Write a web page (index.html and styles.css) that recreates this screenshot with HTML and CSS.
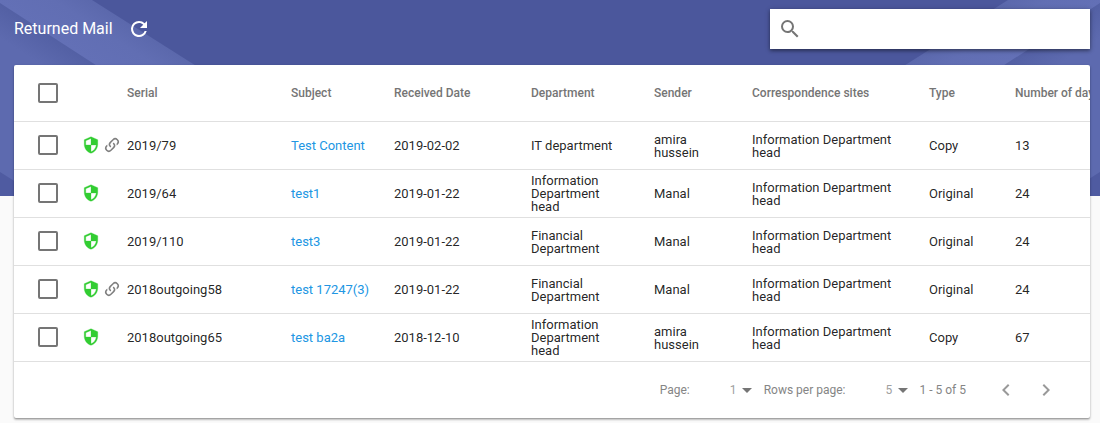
FILE: index.html
```html
<!DOCTYPE html>
<html lang="en">
<head>
<meta charset="utf-8">
<title>Returned Mail</title>
<link rel="stylesheet" href="styles.css">
</head>
<body>
<svg class="symbols" aria-hidden="true">
  <symbol id="shield" viewBox="0 0 24 24"><path stroke="currentColor" stroke-width=".4" d="M12 1 3 5v6c0 5.550 3.840 10.740 9 12 5.160-1.260 9-6.450 9-12V5l-9-4zm0 10.990h7c-.53 4.120-3.280 7.790-7 8.940V12H5V6.300l7-3.110v8.800z"/></symbol>
  <symbol id="link" viewBox="0 0 24 24"><path d="M10.590 13.410c.41.39.41 1.030 0 1.420-.39.39-1.030.39-1.420 0a5.003 5.003 0 0 1 0-7.070l3.540-3.540a5.003 5.003 0 0 1 7.070 0 5.003 5.003 0 0 1 0 7.070l-1.490 1.490c.01-.82-.12-1.640-.4-2.420l.47-.48a2.982 2.982 0 0 0 0-4.240 2.982 2.982 0 0 0-4.240 0l-3.530 3.530a2.982 2.982 0 0 0 0 4.240zm2.820-4.240c.39-.39 1.030-.39 1.420 0a5.003 5.003 0 0 1 0 7.070l-3.540 3.540a5.003 5.003 0 0 1-7.070 0 5.003 5.003 0 0 1 0-7.070l1.490-1.490c-.01.82.12 1.640.4 2.430l-.47.47a2.982 2.982 0 0 0 0 4.240 2.982 2.982 0 0 0 4.240 0l3.530-3.530a2.982 2.982 0 0 0 0-4.240.973.973 0 0 1 0-1.420z"/></symbol>
</svg>
<div class="page">
  <div class="backdrop" aria-hidden="true">
    <svg class="ribbon" width="310" height="196" viewBox="0 0 310 196">
      <defs>
        <linearGradient id="band" gradientUnits="userSpaceOnUse" x1="50" y1="35" x2="78" y2="-9">
          <stop offset="0" stop-color="#6370b6"/><stop offset=".6" stop-color="#616eb3"/><stop offset="1" stop-color="#5b68ac"/>
        </linearGradient>
        <linearGradient id="fold" gradientUnits="userSpaceOnUse" x1="50" y1="35" x2="34" y2="60">
          <stop offset="0" stop-color="#5360a4"/><stop offset="1" stop-color="#5d6aaf"/>
        </linearGradient>
      </defs>
      <path d="M0 0H92L310 138V196H0z" fill="url(#band)"/>
      <path d="M0 3 298 196H0z" fill="url(#fold)"/>
      <path d="M0 172 38 196H0z" fill="#4f5ba1"/>
    </svg>
    <svg class="ribbon ribbon-mirrored" width="310" height="196" viewBox="0 0 310 196">
      <path d="M0 0H92L310 138V196H0z" fill="url(#band)"/>
      <path d="M0 3 298 196H0z" fill="url(#fold)"/>
      <path d="M0 172 38 196H0z" fill="#4f5ba1"/>
    </svg>
  </div>
  <header class="toolbar">
    <h1 class="title">Returned Mail</h1>
    <button class="icon-button" type="button" aria-label="Refresh">
      <svg width="24" height="24" viewBox="0 0 24 24"><path d="M17.650 6.350A7.958 7.958 0 0 0 12 4a8 8 0 1 0 7.730 10h-2.080A6 6 0 1 1 12 6c1.660 0 3.140.69 4.220 1.780L13 11h7V4z"/></svg>
    </button>
    <label class="search">
      <svg width="24" height="24" viewBox="0 0 24 24"><path d="M15.500 14h-.79l-.28-.27A6.471 6.471 0 0 0 16 9.500 6.500 6.500 0 1 0 9.500 16c1.610 0 3.090-.59 4.230-1.570l.27.28v.79l5 4.990L20.490 19zm-6 0a4.500 4.500 0 1 1 0-9 4.500 4.500 0 0 1 0 9z"/></svg>
      <input class="search-input" type="text" aria-label="Search">
    </label>
  </header>
  <main class="card">
    <div class="table-scroll">
      <table class="mail-table">
        <colgroup><col class="col-check"><col class="col-icons"><col class="col-serial"><col class="col-subject"><col class="col-date"><col class="col-department"><col class="col-sender"><col class="col-sites"><col class="col-type"><col></colgroup>
        <thead>
          <tr><th><input class="check" type="checkbox" aria-label="Select all"></th><th></th><th>Serial</th><th>Subject</th><th>Received Date</th><th>Department</th><th>Sender</th><th>Correspondence sites</th><th>Type</th><th>Number of days</th></tr>
        </thead>
        <tbody>
          <tr><td><input class="check" type="checkbox" aria-label="Select 2019/79"></td><td><div class="marks"><svg class="shield"><use href="#shield"/></svg><svg class="link"><use href="#link"/></svg></div></td><td>2019/79</td><td><a href="#">Test Content</a></td><td>2019-02-02</td><td>IT department</td><td>amira hussein</td><td>Information Department head</td><td>Copy</td><td>13</td></tr>
          <tr><td><input class="check" type="checkbox" aria-label="Select 2019/64"></td><td><div class="marks"><svg class="shield"><use href="#shield"/></svg></div></td><td>2019/64</td><td><a href="#">test1</a></td><td>2019-01-22</td><td>Information Department head</td><td>Manal</td><td>Information Department head</td><td>Original</td><td>24</td></tr>
          <tr><td><input class="check" type="checkbox" aria-label="Select 2019/110"></td><td><div class="marks"><svg class="shield"><use href="#shield"/></svg></div></td><td>2019/110</td><td><a href="#">test3</a></td><td>2019-01-22</td><td>Financial Department</td><td>Manal</td><td>Information Department head</td><td>Original</td><td>24</td></tr>
          <tr><td><input class="check" type="checkbox" aria-label="Select 2018outgoing58"></td><td><div class="marks"><svg class="shield"><use href="#shield"/></svg><svg class="link"><use href="#link"/></svg></div></td><td>2018outgoing58</td><td><a href="#">test 17247(3)</a></td><td>2019-01-22</td><td>Financial Department</td><td>Manal</td><td>Information Department head</td><td>Original</td><td>24</td></tr>
          <tr><td><input class="check" type="checkbox" aria-label="Select 2018outgoing65"></td><td><div class="marks"><svg class="shield"><use href="#shield"/></svg></div></td><td>2018outgoing65</td><td><a href="#">test ba2a</a></td><td>2018-12-10</td><td>Information Department head</td><td>amira hussein</td><td>Information Department head</td><td>Copy</td><td>67</td></tr>
        </tbody>
      </table>
    </div>
    <footer class="pagination">
      <div class="picker">
        <label for="page">Page:</label>
        <span class="select-wrap"><select id="page" class="select"><option>1</option></select><svg class="caret" width="10" height="5" viewBox="0 0 10 5"><path d="M0 0h10L5 5z"/></svg></span>
      </div>
      <div class="picker">
        <label for="rows">Rows per page:</label>
        <span class="select-wrap"><select id="rows" class="select"><option>5</option></select><svg class="caret" width="10" height="5" viewBox="0 0 10 5"><path d="M0 0h10L5 5z"/></svg></span>
      </div>
      <span class="range">1 - 5 of 5</span>
      <div class="pager">
        <button class="icon-button pager-button" type="button" aria-label="Previous page"><svg width="24" height="24" viewBox="0 0 24 24"><path d="M15.410 7.410 14 6l-6 6 6 6 1.410-1.410L10.830 12z"/></svg></button>
        <button class="icon-button pager-button" type="button" aria-label="Next page"><svg width="24" height="24" viewBox="0 0 24 24"><path d="M10 6 8.590 7.410 13.170 12l-4.580 4.590L10 18l6-6z"/></svg></button>
      </div>
    </footer>
  </main>
</div>
</body>
</html>
```

FILE: styles.css
```css
* {
  box-sizing: border-box;
}

body {
  margin: 0;
  background: #fafafa;
  font-family: Roboto, "Liberation Sans", sans-serif;
  font-size: 13px;
  color: rgba(0, 0, 0, 0.87);
}

svg {
  display: block;
  flex: none;
  fill: currentColor;
}

.symbols {
  display: none;
}

.page {
  position: relative;
  padding: 0 10px 5px 14px;
}

.backdrop {
  position: absolute;
  inset: 0 0 auto;
  z-index: -1;
  display: flex;
  justify-content: space-between;
  height: 196px;
  overflow: hidden;
  background: #4b579c;
}

.ribbon-mirrored {
  transform: scaleX(-1);
}

.toolbar {
  display: flex;
  align-items: center;
  padding: 9px 0 16px;
  color: #fff;
}

.title {
  margin: 0 14px 0 0;
  font-size: 16px;
  font-weight: 400;
  line-height: 24px;
}

.icon-button {
  padding: 0;
  border: 0;
  background: none;
  color: inherit;
  cursor: pointer;
}

.search {
  display: flex;
  align-items: center;
  gap: 8px;
  width: 320px;
  height: 40px;
  margin-left: auto;
  padding: 0 8px;
  background: #fff;
  color: #757575;
  box-shadow: 0 1px 5px rgba(0, 0, 0, 0.3), 0 2px 3px rgba(0, 0, 0, 0.25);
}

.search-input {
  flex: 1;
  min-width: 0;
  border: 0;
  outline: 0;
  background: none;
  font: inherit;
}

.card {
  border-radius: 2px;
  background: #fff;
  box-shadow: 0 1px 3px rgba(0, 0, 0, 0.2), 0 1px 1px rgba(0, 0, 0, 0.14), 0 2px 2px rgba(0, 0, 0, 0.14);
}

.table-scroll {
  overflow-x: auto;
  scrollbar-width: none;
}

.mail-table {
  width: 100%;
  min-width: 1140px;
  table-layout: fixed;
  border-collapse: separate;
  border-spacing: 0;
}

.col-check { width: 68px; }
.col-icons { width: 45px; }
.col-serial { width: 164px; }
.col-subject { width: 103px; }
.col-date { width: 137px; }
.col-department { width: 123px; }
.col-sender { width: 98px; }
.col-sites { width: 177px; }
.col-type { width: 86px; }

th,
td {
  padding: 0 24px 0 0;
  border-bottom: 1px solid #e0e0e0;
  line-height: 13px;
  text-align: left;
  vertical-align: middle;
}

th {
  height: 57px;
  color: #757575;
  font-size: 12px;
  font-weight: 500;
  white-space: nowrap;
}

td {
  height: 48px;
}

th:first-child,
td:first-child {
  padding: 0 0 0 24px;
}

td:nth-child(-n + 2) {
  padding-bottom: 1px;
}

td:nth-child(2),
td:nth-child(4) {
  padding-right: 0;
}

td a {
  color: #2196e3;
  text-decoration: none;
}

.check {
  display: block;
  appearance: none;
  width: 20px;
  height: 20px;
  margin: 0;
  border: 2px solid #757575;
  border-radius: 2px;
}

.marks {
  display: flex;
  align-items: center;
  gap: 3px;
}

.shield {
  width: 18px;
  height: 18px;
  color: #32cd32;
}

.link {
  width: 18px;
  height: 18px;
  color: #808080;
}

.pagination {
  display: flex;
  align-items: center;
  justify-content: flex-end;
  height: 56px;
  padding-right: 32px;
  color: #858585;
  font-size: 12px;
}

.picker {
  display: flex;
  align-items: center;
  gap: 40px;
  margin-right: 12px;
}

.select-wrap {
  display: flex;
  align-items: center;
  gap: 5px;
}

.select {
  appearance: none;
  padding: 0;
  border: 0;
  background: none;
  color: #a0a0a0;
  font: inherit;
}

.caret {
  color: #757575;
}

.pager {
  display: flex;
  gap: 16px;
  margin-left: 28px;
}

.pager-button {
  color: #999;
}
```
